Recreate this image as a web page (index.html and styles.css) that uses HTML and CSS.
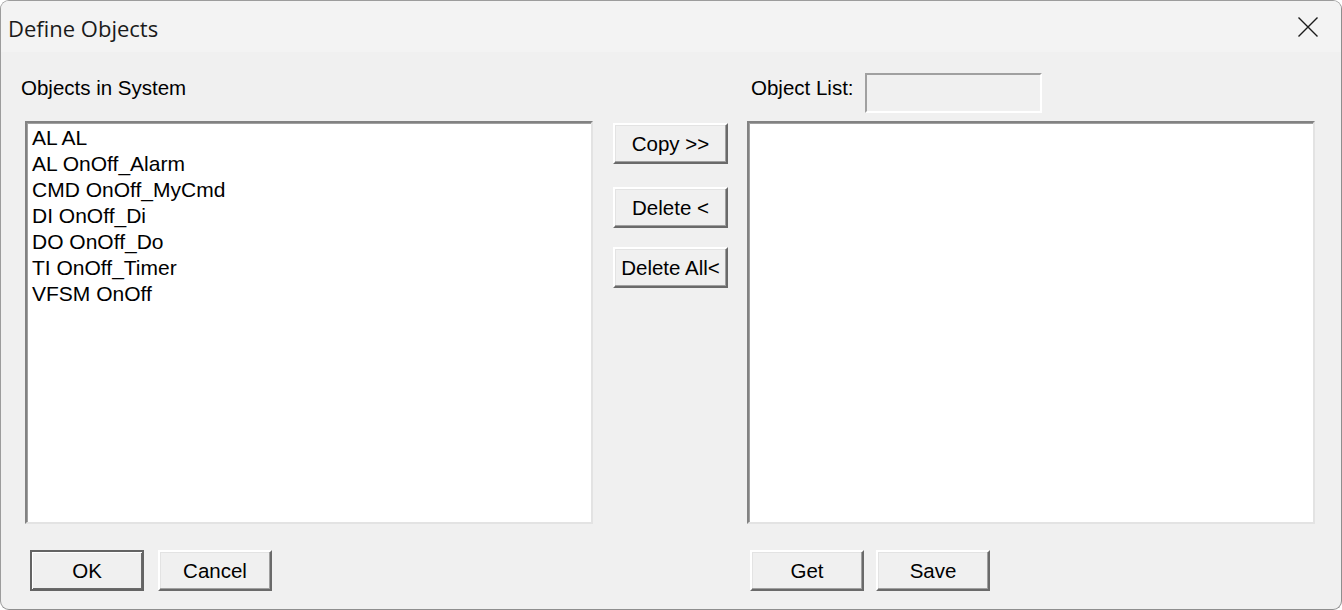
FILE: index.html
```html
<!DOCTYPE html>
<html>
<head>
<meta charset="utf-8">
<link rel="stylesheet" href="styles.css">
</head>
<body>
<div class="window">
  <div class="titlebar">
    <span class="title">Define Objects</span>
    <span class="close">
      <svg width="20" height="20" viewBox="0 0 20 20"><path d="M0.5 0.5 L19.5 19.5 M19.5 0.5 L0.5 19.5" stroke="#1b1b1b" stroke-width="1.4" fill="none"/></svg>
    </span>
  </div>
  <div class="content">
    <div class="head-left"><span class="label">Objects in System</span></div>
    <div class="head-right"><span class="label">Object List:</span><div class="field"></div></div>
    <div class="listbox list-left">
      <div class="item">AL AL</div>
      <div class="item">AL OnOff_Alarm</div>
      <div class="item">CMD OnOff_MyCmd</div>
      <div class="item">DI OnOff_Di</div>
      <div class="item">DO OnOff_Do</div>
      <div class="item">TI OnOff_Timer</div>
      <div class="item">VFSM OnOff</div>
    </div>
    <div class="middle">
      <button class="btn btn-copy">Copy &gt;&gt;</button>
      <button class="btn btn-del">Delete &lt;</button>
      <button class="btn btn-delall">Delete All&lt;</button>
    </div>
    <div class="listbox list-right"></div>
    <div class="foot-left">
      <button class="btn btn-wide btn-default">OK</button>
      <button class="btn btn-wide">Cancel</button>
    </div>
    <div class="foot-right">
      <button class="btn btn-wide">Get</button>
      <button class="btn btn-wide">Save</button>
    </div>
  </div>
</div>
</body>
</html>
```

FILE: styles.css
```css
html, body {
  margin: 0;
  padding: 0;
  background: #ffffff;
}
.window {
  width: 1342px;
  height: 610px;
  box-sizing: border-box;
  border: 1px solid #9c9c9c;
  border-right-color: #8e8e8e;
  border-bottom-color: #8e8e8e;
  border-radius: 9px;
  overflow: hidden;
  background: #f0f0f0;
  font-family: "Liberation Sans", Arial, sans-serif;
  color: #000;
}
.titlebar {
  height: 51px;
  background: #f3f3f3;
  display: flex;
  align-items: center;
  justify-content: space-between;
  padding-left: 7px;
  padding-right: 23px;
}
.title {
  font-family: "Open Sans", "Noto Sans", sans-serif;
  font-size: 22px;
  color: #1a1a1a;
  margin-top: 2px;
}
.close {
  display: flex;
  margin-top: 1px;
}
.content {
  display: grid;
  grid-template-columns: 568px 115px 567px;
  grid-template-rows: 69px 403px 66px;
  column-gap: 20px;
  padding-left: 24px;
}
.content > .head-left { grid-column: 1; grid-row: 1; }
.content > .head-right { grid-column: 3; grid-row: 1; }
.content > .list-left { grid-column: 1; grid-row: 2; }
.content > .middle { grid-column: 2; grid-row: 2; }
.content > .list-right { grid-column: 3; grid-row: 2; margin-left: -1px; }
.content > .foot-left { grid-column: 1; grid-row: 3; }
.content > .foot-right { grid-column: 3; grid-row: 3; }
.label {
  font-size: 20.5px;
  line-height: 24px;
}
.head-left {
  padding-top: 24px;
  margin-left: -4px;
}
.head-right {
  display: flex;
  align-items: flex-start;
  padding-top: 21px;
  padding-left: 3px;
}
.head-right .label {
  margin-top: 3px;
}
.field {
  width: 177px;
  height: 40px;
  box-sizing: border-box;
  margin-left: 11px;
  border: 2px solid;
  border-color: #a0a0a0 #ffffff #ffffff #a0a0a0;
  background: #f0f0f0;
}
.listbox {
  box-sizing: border-box;
  background: #ffffff;
  border-style: solid;
  border-width: 2px;
  border-color: #828282 #e3e3e3 #e3e3e3 #828282;
  box-shadow: inset 1px 1px 0 #a0a0a0;
  padding: 2px 0 0 5px;
}
.item {
  font-size: 21px;
  line-height: 26px;
  white-space: nowrap;
}
.middle {
  display: flex;
  flex-direction: column;
  padding-top: 2px;
}
.btn {
  font-family: "Liberation Sans", Arial, sans-serif;
  font-size: 20.5px;
  color: #000;
  background: #f0f0f0;
  box-sizing: border-box;
  border-style: solid;
  border-width: 2px;
  border-color: #ffffff #6a6a6a #6a6a6a #ffffff;
  box-shadow: inset -1px -1px 0 #a0a0a0, inset 1px 1px 0 #e3e3e3;
  padding: 0;
  margin: 0;
  height: 41px;
  width: 115px;
  white-space: nowrap;
}
.btn-del { margin-top: 23px; }
.btn-delall { margin-top: 19px; }
.foot-left, .foot-right {
  display: flex;
  align-items: flex-start;
  padding-top: 26px;
}
.foot-left { padding-left: 5px; gap: 14px; }
.foot-right { padding-left: 2px; gap: 12px; }
.btn-wide {
  width: 114px;
  height: 41px;
}
.btn-default {
  border-color: #646464;
  box-shadow: inset 1px 1px 0 #ffffff, inset -1px -1px 0 #6a6a6a;
}
```
